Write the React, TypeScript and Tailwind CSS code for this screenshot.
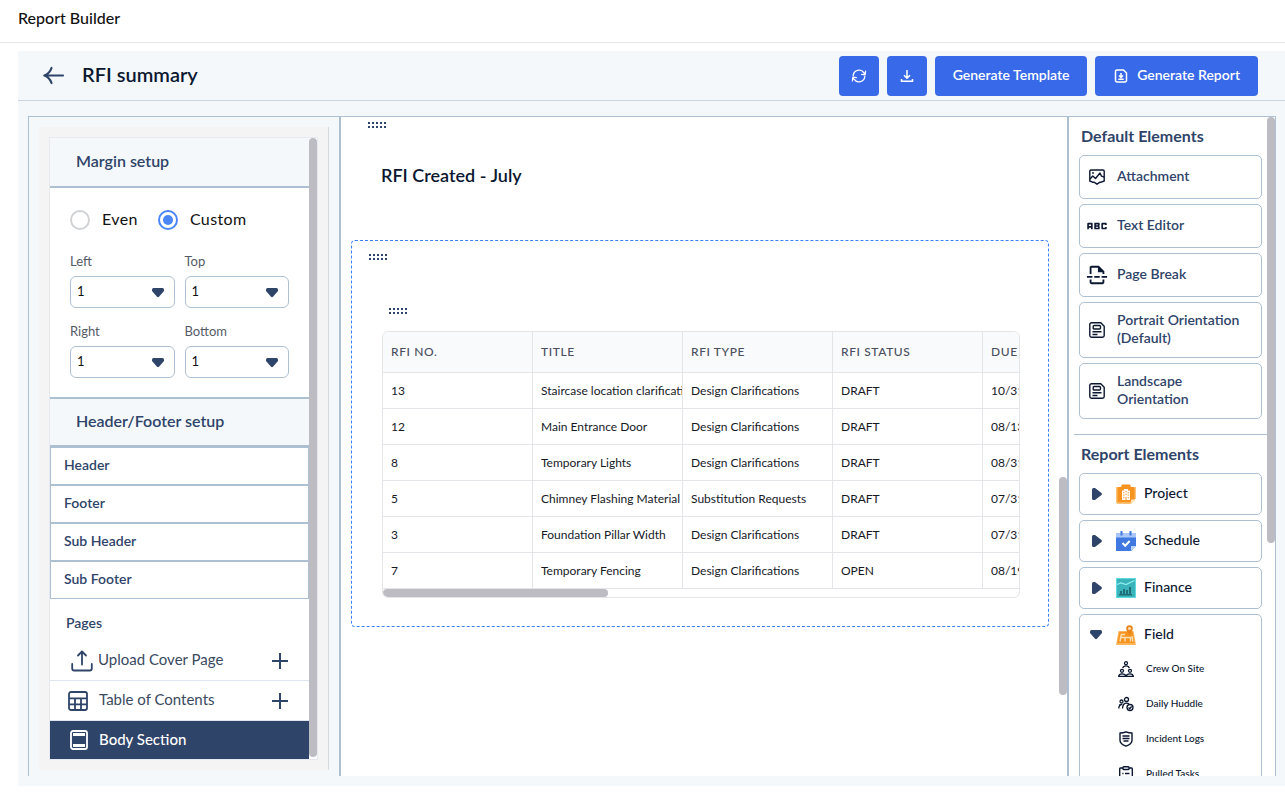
import React, { useState } from 'react';
import { MdAbc, MdOutlineInsertPageBreak } from 'react-icons/md';

const rfiRows = [
  { no: '13', title: 'Staircase location clarification', type: 'Design Clarifications', status: 'DRAFT', due: '10/31/2024' },
  { no: '12', title: 'Main Entrance Door', type: 'Design Clarifications', status: 'DRAFT', due: '08/13/2024' },
  { no: '8', title: 'Temporary Lights', type: 'Design Clarifications', status: 'DRAFT', due: '08/31/2024' },
  { no: '5', title: 'Chimney Flashing Material', type: 'Substitution Requests', status: 'DRAFT', due: '07/31/2024' },
  { no: '3', title: 'Foundation Pillar Width', type: 'Design Clarifications', status: 'DRAFT', due: '07/31/2024' },
  { no: '7', title: 'Temporary Fencing', type: 'Design Clarifications', status: 'OPEN', due: '08/19/2024' },
];

const columns = ['RFI NO.', 'TITLE', 'RFI TYPE', 'RFI STATUS', 'DUE DATE'];

/* Icons */

function BackIcon() {
  return (
    <svg width="24" height="24" viewBox="0 0 24 24" fill="none" stroke="#2f4469" strokeWidth="2.2" strokeLinecap="round" strokeLinejoin="round">
      <path d="M22 11.500H3.500M10.500 4C9.500 7 6.500 10.500 3.300 11.500C6.500 12.500 9.500 16 10.500 19" />
    </svg>
  );
}

function SyncIcon() {
  return (
    <svg width="16" height="16" viewBox="0 0 16 16" fill="none" stroke="currentColor" strokeWidth="1.3" strokeLinecap="round" strokeLinejoin="round">
      <path d="M2.200 7.500A5.900 5.900 0 0 1 13 4.900L14 6.600M14.600 3.200L14.100 6.800L10.700 6.300" />
      <path d="M13.800 8.500A5.900 5.900 0 0 1 3 11.100L2 9.400M1.400 12.800L1.900 9.200L5.300 9.700" />
    </svg>
  );
}

function DownloadIcon() {
  return (
    <svg width="16" height="16" viewBox="0 0 16 16" fill="none" stroke="currentColor" strokeWidth="1.500">
      <path d="M8 2v8M5 7.300l3 3 3-3M2.500 11v2.300h11V11" />
    </svg>
  );
}

function ReportIcon() {
  return (
    <svg width="16" height="16" viewBox="0 0 16 16" fill="none" stroke="currentColor" strokeWidth="1.500">
      <path d="M4 2h6.500l3 3v7.500a1.500 1.500 0 0 1-1.500 1.500H4a1.500 1.500 0 0 1-1.500-1.500v-9A1.500 1.500 0 0 1 4 2z" />
      <path d="M8 5v4M6 7.500l2 2 2-2M5.300 11.300h5.400" />
    </svg>
  );
}

function Triangle({ right = false }: { right?: boolean }) {
  return right ? (
    <svg width="10" height="12" viewBox="0 0 10 12" fill="#2f4469">
      <path d="M0 1.500Q0 0 1.500 0H3L9.500 5Q10.300 6 9.500 7L3 12H1.500Q0 12 0 10.500z" />
    </svg>
  ) : (
    <svg width="12" height="10" viewBox="0 0 12 10" fill="#2f4469">
      <path d="M1.500 0h9Q12 0 12 1.500V3L7 8.800Q6 9.700 5 8.800L0 3V1.500Q0 0 1.500 0z" />
    </svg>
  );
}

function UploadIcon() {
  return (
    <svg width="22" height="22" viewBox="0 0 22 22" fill="none" stroke="currentColor" strokeWidth="1.800" strokeLinecap="round" strokeLinejoin="round">
      <path d="M11 14.500V2M7 5.500L11 1.500L15 5.500M1.200 14v4.500a2 2 0 0 0 2 2h15.600a2 2 0 0 0 2-2V14" />
    </svg>
  );
}

function TableIcon() {
  return (
    <svg width="20" height="20" viewBox="0 0 20 20" fill="none" stroke="currentColor" strokeWidth="1.800">
      <rect x="1" y="1" width="18" height="18" rx="2" />
      <path d="M1 7.300h18M1 13.300h18M7 7.300V19M13 7.300V19" />
    </svg>
  );
}

function BodyIcon() {
  return (
    <svg width="18" height="20" viewBox="0 0 18 20" fill="none" stroke="currentColor" strokeWidth="1.800">
      <rect x="1" y="1" width="16" height="18" rx="2" />
      <path d="M3 4.500h12M3 15.500h12" strokeWidth="3" />
    </svg>
  );
}

function PlusIcon() {
  return (
    <svg width="16" height="16" viewBox="0 0 16 16" stroke="#2f4469" strokeWidth="2">
      <path d="M8 0v16M0 8h16" />
    </svg>
  );
}

function AttachmentIcon() {
  return (
    <svg width="16" height="16" viewBox="0 0 16 16" fill="none" stroke="currentColor" strokeWidth="1.400" strokeLinejoin="round">
      <path d="M2 1h12a1.200 1.200 0 0 1 1.200 1.200V12l-3 1.200H11L8 15.200l-3-2H3.500L.8 12V2.200A1.200 1.200 0 0 1 2 1z" />
      <path d="M1 10l2.800-3 2.700 2.500L11 4l1.500 3.200 2.700 1" />
      <circle cx="4" cy="4" r=".9" fill="currentColor" stroke="none" />
    </svg>
  );
}

function OrientationIcon() {
  return (
    <svg width="16" height="16" viewBox="0 0 16 16" fill="none" stroke="currentColor" strokeWidth="1.400" strokeLinejoin="round">
      <path d="M2.500.8h9.300l3.400 3.400v9.300a1.700 1.700 0 0 1-1.700 1.700h-11A1.700 1.700 0 0 1 .8 13.500v-11A1.700 1.700 0 0 1 2.500.8z" />
      <rect x="4.200" y="3.500" width="7.300" height="3.500" rx="1" />
      <path d="M3.500 9.800h9M3.500 12.500h5" />
    </svg>
  );
}

function ProjectIcon() {
  return (
    <svg width="20" height="20" viewBox="0 0 20 20">
      <path d="M1 3.500h18V15l-4 4.500H1z" fill="#fbbf6b" />
      <path d="M1.500 3H5l1-2.500h8L15 3h3.500v12.500L15 18.500H1.500z" fill="#f7931e" />
      <path d="M0 3h1v16H0zM19 3h1v12h-1zM1 18.500h14V20H1z" fill="#fcc277" />
      <path d="M15 20v-4.500h5z" fill="#fde0b5" />
      <path d="M6 6.500h2V5h4v1.500h2V16H6z" fill="#fff" />
      <path d="M7.300 8h1v1.200h-1zM9.500 7h1v1.200h-1zM11.700 8h1v1.200h-1zM7.300 10.500h1v1.200h-1zM9.500 9.800h1V11h-1zM11.700 10.500h1v1.200h-1zM7.300 13h1v1.200h-1zM9.500 13h1v3h-1zM11.700 13h1v1.200h-1z" fill="#f7931e" />
    </svg>
  );
}

function ScheduleIcon() {
  return (
    <svg width="20" height="20" viewBox="0 0 20 20">
      <path d="M0 2h20v5H0z" fill="#a9c7f8" />
      <path d="M4.500 0h2v4.500h-2zM13.500 0h2v4.500h-2z" fill="#3f78e0" />
      <path d="M0 6.500h20V15l-5 5H0z" fill="#3f78e0" />
      <path d="M15 20v-5h5z" fill="#bcd4fb" />
      <path d="M6.500 12l2.700 2.700 4.500-4.700" fill="none" stroke="#fff" strokeWidth="2" />
    </svg>
  );
}

function FinanceIcon() {
  return (
    <svg width="20" height="20" viewBox="0 0 20 20">
      <path d="M0 0h20v20H0z" fill="#5fdbdd" />
      <path d="M1 1h18v18H1z" fill="#3bb3ba" />
      <path d="M1 6.500L5 5l5 1.500L18.500 2.500" fill="none" stroke="#8df0ee" strokeWidth="1.200" />
      <path d="M4 13h2v4H4zM7 11h2v6H7zM10 12h2v5h-2zM13 9h2v8h-2zM3 16h13v1.500H3z" fill="#1f6e78" />
    </svg>
  );
}

function FieldIcon() {
  return (
    <svg width="20" height="20" viewBox="0 0 20 20">
      <path d="M2.500 6h15l2.500 14H0z" fill="#fcb55c" />
      <path d="M3.500 7h13l2 11H1.500z" fill="#f7931e" />
      <path d="M4 16.500L5.300 9.500H9M5 12.500h4v4M9 12.500h5.500v4M16 11l.8 5.500" fill="none" stroke="#fde0b5" strokeWidth="1.400" />
      <path d="M13.500 10C11 6.800 10.200 5 10.200 3.500a3.300 3.300 0 0 1 6.600 0c0 1.500-.8 3.300-3.300 6.500z" fill="#e9851a" />
      <circle cx="13.500" cy="3.500" r="1.500" fill="#fde0b5" />
    </svg>
  );
}

function CrewIcon() {
  return (
    <svg width="16" height="16" viewBox="0 0 16 16" fill="none" stroke="currentColor" strokeWidth="1.300">
      <circle cx="8" cy="2.200" r="1.500" />
      <path d="M4.700 7.200C5 5.500 6.200 4.800 8 4.800s3 .7 3.300 2.400" />
      <circle cx="4" cy="9.800" r="1.500" />
      <circle cx="12" cy="9.800" r="1.500" />
      <path d="M.7 15.300c.2-1.800 1.400-2.500 3.300-2.500s3.500.7 4 2.300c.5-1.600 2.100-2.300 4-2.300s3.100.7 3.300 2.500z" />
    </svg>
  );
}

function HuddleIcon() {
  return (
    <svg width="16" height="16" viewBox="0 0 16 16" fill="none" stroke="currentColor" strokeWidth="1.300">
      <circle cx="8.500" cy="3.500" r="2" />
      <circle cx="3.500" cy="5.500" r="1.500" />
      <path d="M.8 12.500c0-2.200 1-3.700 3-3.900M4.500 12.500C4.700 9 6 7.200 8.500 7.200c1 0 1.800.2 2.500.8M1 9l3.500-1" />
      <circle cx="12" cy="11.500" r="3" />
      <path d="M10.500 11.500l1.200 1.200 2-2.200" />
    </svg>
  );
}

function IncidentIcon() {
  return (
    <svg width="16" height="16" viewBox="0 0 16 16" fill="none" stroke="currentColor" strokeWidth="1.400" strokeLinejoin="round">
      <path d="M8 .8c2 .9 4 1.200 6 1.200v7.500c0 2.500-3 4.500-6 5.700-3-1.200-6-3.200-6-5.700V2C4 2 6 1.700 8 .8z" />
      <path d="M4.500 5h7M4.500 7.500h7M5.500 10h5" />
    </svg>
  );
}

function TasksIcon() {
  return (
    <svg width="16" height="16" viewBox="0 0 16 16" fill="none" stroke="currentColor" strokeWidth="1.400">
      <path d="M5 2H2.500A1 1 0 0 0 1.700 3v12.200h12.600V3a1 1 0 0 0-.8-1H11" />
      <rect x="5" y=".8" width="6" height="2.700" rx=".8" />
      <path d="M4.300 7.500h1.200M7 7.500h4.500M4.300 11h1.200M7 11h4.500" />
    </svg>
  );
}

function DragHandle() {
  return (
    <svg width="20" height="6" viewBox="0 0 20 6" fill="#2f4469" shapeRendering="crispEdges">
      {[0, 4, 8, 12, 16].map((x) => (
        <React.Fragment key={x}>
          <rect x={x} y="0" width="2" height="2" />
          <rect x={x} y="4" width="2" height="2" />
        </React.Fragment>
      ))}
    </svg>
  );
}

/* Left panel */

function MarginSelect({ label }: { label: string }) {
  const id = `margin-${label.toLowerCase()}`;
  return (
    <div className="flex-1">
      <label htmlFor={id} className="block h-5 text-[13px] leading-5 text-[#555b66]">{label}</label>
      <div className="relative mt-[5px]">
        <select id={id} defaultValue="1" className="block h-8 w-full appearance-none rounded-md border border-[#adc0d2] bg-white pl-[6px] text-[13px] text-[#111]">
          <option>0</option>
          <option>1</option>
          <option>2</option>
        </select>
        <span className="pointer-events-none absolute top-3 right-[11px]"><Triangle /></span>
      </div>
    </div>
  );
}

function MarginRadio({ label, checked, onChange }: { label: string; checked: boolean; onChange: () => void }) {
  return (
    <label className="flex items-center gap-3 text-base leading-5 tracking-wide text-[#111]">
      <input
        type="radio"
        name="margin"
        checked={checked}
        onChange={onChange}
        className="size-5 appearance-none rounded-full border-2 border-[#d0d2d6] bg-white bg-clip-content p-[3px] checked:border-[#4a86f5] checked:bg-[#4a86f5]"
      />
      <span className="pb-0.5">{label}</span>
    </label>
  );
}

function SetupPanel() {
  const [margin, setMargin] = useState('Custom');

  return (
    <aside className="w-[311px] shrink-0 border-l border-[#adc0d2] px-[10px] pt-[10px] pb-[6px]">
      <div className="h-full border-r border-[#d6d9dd] bg-[#f4f4f4] p-[10px]">
        <div className="relative h-full overflow-hidden border border-[#e6e9f2] bg-white pr-2">
          <h2 className="flex h-[50px] items-center border-b-2 border-[#adc0d2] bg-[#f4f8fb] pb-0.5 pl-[26px] text-base font-semibold text-[#2f4469]">Margin setup</h2>

          <div className="h-[209px] px-5 pt-[21px]">
            <div className="flex gap-5">
              <MarginRadio label="Even" checked={margin === 'Even'} onChange={() => setMargin('Even')} />
              <MarginRadio label="Custom" checked={margin === 'Custom'} onChange={() => setMargin('Custom')} />
            </div>
            <div className="mt-5 flex gap-[10px]">
              <MarginSelect label="Left" />
              <MarginSelect label="Top" />
            </div>
            <div className="mt-[13px] flex gap-[10px]">
              <MarginSelect label="Right" />
              <MarginSelect label="Bottom" />
            </div>
          </div>

          <h2 className="flex h-[50px] items-center border-y-2 border-[#adc0d2] bg-[#f4f8fb] pb-0.5 pl-[26px] text-base font-semibold text-[#2f4469]">Header/Footer setup</h2>
          {['Header', 'Footer', 'Sub Header', 'Sub Footer'].map((name) => (
            <button key={name} className="block h-[38px] w-full border border-[#adc0d2] pb-0.5 pl-[13px] text-left text-sm font-semibold text-[#2f4469]">
              {name}
            </button>
          ))}

          <h3 className="flex h-[42px] items-center pt-[6px] pl-4 text-sm font-semibold text-[#2f4469]">Pages</h3>
          <div className="flex h-10 items-center border-b border-[#dde5ef] pr-[21px] pl-[21px] text-[#2f4469]">
            <UploadIcon />
            <span className="ml-[5px] flex-1 pb-0.5 text-[15px] text-[#3a4a5f]">Upload Cover Page</span>
            <button aria-label="Add cover page"><PlusIcon /></button>
          </div>
          <div className="flex h-10 items-center border-b border-[#dde5ef] pr-[21px] pl-[18px] text-[#2f4469]">
            <TableIcon />
            <span className="ml-[11px] flex-1 pb-0.5 text-[15px] text-[#3a4a5f]">Table of Contents</span>
            <button aria-label="Add table of contents"><PlusIcon /></button>
          </div>
          <button className="flex h-[38px] w-full items-center bg-[#2f4469] pl-5 text-[15px] font-medium text-white">
            <BodyIcon />
            <span className="ml-[11px] pb-0.5">Body Section</span>
          </button>

          <div className="absolute top-0 right-0 bottom-[2px] w-2 rounded-full bg-[#bdbcc3]"></div>
        </div>
      </div>
    </aside>
  );
}

/* Report canvas */

function ReportCanvas() {
  return (
    <main className="relative min-w-0 flex-1 overflow-hidden border-x-2 border-[#adc0d2] bg-white">
      <div className="pt-[5px] pl-[27px]"><DragHandle /></div>
      <h2 className="mt-[35px] pl-10 text-lg leading-6 font-semibold text-[#0b1730]">RFI Created - July</h2>

      <section className="mt-[53px] mr-[18px] ml-[10px] rounded border border-dashed border-[#3b82f6] pt-[13px] pb-7">
        <div className="pl-[17px]"><DragHandle /></div>
        <div className="mt-12 pl-[37px]"><DragHandle /></div>
        <div className="relative mt-[17px] mr-7 ml-[30px] overflow-hidden rounded-md border border-[#e4e5e9] pb-2">
          <table className="w-[1050px] table-fixed border-separate border-spacing-0 text-left leading-5">
            <colgroup>
              <col className="w-[150px]" />
              <col className="w-[150px]" />
              <col className="w-[150px]" />
              <col className="w-[150px]" />
              <col />
            </colgroup>
            <thead>
              <tr>
                {columns.map((name) => (
                  <th key={name} className="h-[41px] overflow-hidden border-r border-b border-[#e4e5e9] bg-[#f8fafc] px-2 text-xs font-medium tracking-wider whitespace-nowrap text-[#4b5060]">{name}</th>
                ))}
              </tr>
            </thead>
            <tbody className="text-xs text-[#16191f]">
              {rfiRows.map((row) => (
                <tr key={row.no}>
                  {[row.no, row.title, row.type, row.status, row.due].map((cell, i) => (
                    <td key={i} className="h-9 overflow-hidden border-r border-b border-[#e4e5e9] pl-2 whitespace-nowrap">{cell}</td>
                  ))}
                </tr>
              ))}
            </tbody>
          </table>
          <div className="absolute bottom-0 left-0 h-2 w-[225px] rounded-full bg-[#bdbcc3]"></div>
        </div>
      </section>

      <div className="absolute top-[360px] right-0 h-[218px] w-2 rounded-full bg-[#bdbcc3]"></div>
    </main>
  );
}

/* Right panel */

function DefaultElement({ icon, tall, children }: { icon: React.ReactNode; tall?: boolean; children: React.ReactNode }) {
  return (
    <button className={`flex w-full items-center rounded-[5px] border border-[#adc0d2] bg-white pl-[7px] text-left text-sm leading-[18px] font-semibold text-[#2f4469] ${tall ? 'h-14' : 'h-11'}`}>
      <span className="mr-[10px] flex w-5 shrink-0 justify-center text-[#0b1730]">{icon}</span>
      <span className="pr-4 pb-0.5">{children}</span>
    </button>
  );
}

function ReportGroup({ icon, name }: { icon: React.ReactNode; name: string }) {
  return (
    <button className="flex h-[42px] w-full items-center rounded-[5px] border border-[#adc0d2] bg-white pl-3 text-left text-sm font-medium text-[#0b1730]">
      <span className="w-6"><Triangle right /></span>
      {icon}
      <span className="ml-2 pb-0.5">{name}</span>
    </button>
  );
}

function ElementsPanel() {
  return (
    <aside className="relative w-[207px] shrink-0 overflow-hidden border-r border-[#adc0d2] bg-white pr-2">
      <div className="flex flex-col gap-[5px] pt-[6px] pr-[5px] pl-[10px]">
        <h2 className="pb-0.5 pl-[2px] text-base leading-[25px] font-bold text-[#2f4469]">Default Elements</h2>
        <DefaultElement icon={<AttachmentIcon />}>Attachment</DefaultElement>
        <DefaultElement icon={<MdAbc size={26} className="shrink-0" />}>Text Editor</DefaultElement>
        <DefaultElement icon={<MdOutlineInsertPageBreak size={22} className="shrink-0" />}>Page Break</DefaultElement>
        <DefaultElement icon={<OrientationIcon />} tall>Portrait Orientation (Default)</DefaultElement>
        <DefaultElement icon={<OrientationIcon />} tall>Landscape Orientation</DefaultElement>
      </div>
      <hr className="mt-[15px] ml-[5px] border-[#adc0d2]" />
      <div className="flex flex-col gap-[5px] pt-[6px] pr-[5px] pl-[10px]">
        <h2 className="pb-0.5 pl-[2px] text-base leading-[25px] font-bold text-[#2f4469]">Report Elements</h2>
        <ReportGroup icon={<ProjectIcon />} name="Project" />
        <ReportGroup icon={<ScheduleIcon />} name="Schedule" />
        <ReportGroup icon={<FinanceIcon />} name="Finance" />
        <div className="rounded-[5px] border border-[#adc0d2] pb-4">
          <button className="flex h-9 w-full items-center pt-1 pl-[10px] text-left text-sm font-medium text-[#0b1730]">
            <span className="w-[26px]"><Triangle /></span>
            <FieldIcon />
            <span className="ml-2 pb-0.5">Field</span>
          </button>
          {[
            { name: 'Crew On Site', icon: <CrewIcon /> },
            { name: 'Daily Huddle', icon: <HuddleIcon /> },
            { name: 'Incident Logs', icon: <IncidentIcon /> },
            { name: 'Pulled Tasks', icon: <TasksIcon /> },
          ].map((item) => (
            <button key={item.name} className="flex h-[35px] w-full items-center pl-[38px] text-[10px] font-medium text-[#0b1730]">
              {item.icon}
              <span className="ml-3">{item.name}</span>
            </button>
          ))}
        </div>
      </div>
      <div className="absolute top-0 right-0 h-[426px] w-2 rounded-full bg-[#bdbcc3]"></div>
    </aside>
  );
}

export default function App() {
  return (
    <div className="flex h-screen flex-col overflow-hidden bg-white pb-[10px] font-['Lato',sans-serif]">
      {/* Page title */}
      <div className="flex h-[43px] shrink-0 items-center border-b border-[#e5e5e5] pb-[7px] pl-[18px]">
        <h1 className="text-base font-medium text-[#111]">Report Builder</h1>
      </div>

      <div className="mt-2 ml-[18px] flex min-h-0 flex-1 flex-col bg-[#f4f8fb]">
        {/* Toolbar */}
        <div className="flex h-[50px] shrink-0 items-center gap-2 border-b border-[#cdd6de] pr-[27px] pl-[23px]">
          <button aria-label="Back"><BackIcon /></button>
          <h2 className="ml-[9px] flex-1 pb-[3px] text-xl leading-6 font-semibold text-[#0b1730]">RFI summary</h2>
          <button aria-label="Refresh" className="flex size-10 items-center justify-center rounded bg-[#3869e8] text-white"><SyncIcon /></button>
          <button aria-label="Download" className="flex size-10 items-center justify-center rounded bg-[#3869e8] text-white"><DownloadIcon /></button>
          <button className="h-10 w-38 rounded bg-[#3869e8] pb-0.5 text-sm font-semibold text-white">Generate Template</button>
          <button className="flex h-10 items-center gap-2 rounded bg-[#3869e8] px-[18px] text-sm font-semibold text-white">
            <ReportIcon />
            <span className="pb-0.5">Generate Report</span>
          </button>
        </div>

        {/* Panels */}
        <div className="mt-[15px] mr-[9px] mb-[10px] ml-[10px] flex min-h-0 flex-1 border-t border-[#adc0d2]">
          <SetupPanel />
          <ReportCanvas />
          <ElementsPanel />
        </div>
      </div>
    </div>
  );
}
